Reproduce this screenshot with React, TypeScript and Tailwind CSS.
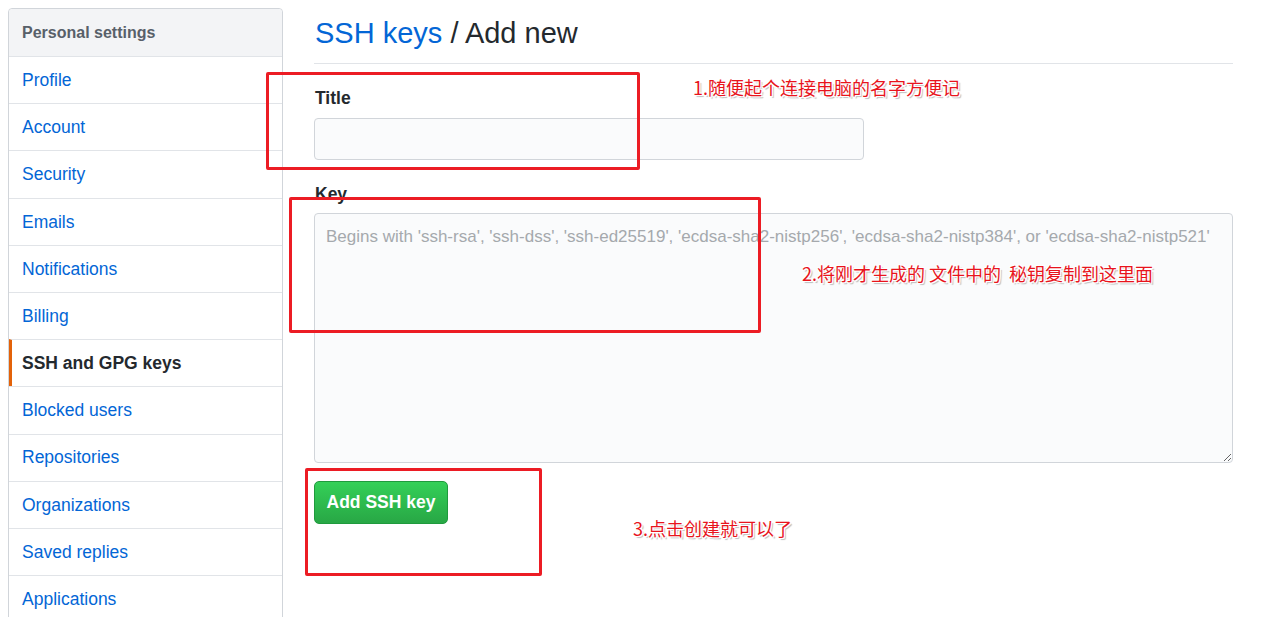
import React from "react";

const menuItems = [
  "Profile",
  "Account",
  "Security",
  "Emails",
  "Notifications",
  "Billing",
  "SSH and GPG keys",
  "Blocked users",
  "Repositories",
  "Organizations",
  "Saved replies",
  "Applications",
];

const noteStyle =
  "absolute text-[18px] leading-none text-[#e8141c] whitespace-pre [text-shadow:1px_1px_0_#fff,-1px_-1px_0_#fff,1px_-1px_0_#fff,-1px_1px_0_#fff,2px_2px_1px_#bbb] font-['Noto_Sans_CJK_SC',sans-serif]";

const App = () => {
  return (
    <div className="relative w-[1265px] h-[617px] overflow-hidden bg-white font-['Liberation_Sans','Noto_Sans_CJK_SC',sans-serif] text-[#24292e]">
      <div className="flex gap-[31px] pl-2 pt-2">
        {/* Sidebar */}
        <nav className="w-[275px] shrink-0 border border-[#d1d5da] rounded-t-[4px] flex flex-col">
          <div className="h-[47px] px-[13px] flex items-center bg-[#f3f4f6] text-[16px] font-semibold text-[#586069] rounded-t-[4px]">
            Personal settings
          </div>
          {menuItems.map((item) => {
            const active = item === "SSH and GPG keys";
            return (
              <div
                key={item}
                className={
                  active
                    ? "h-[47.2px] border-t border-[#e1e4e8] border-l-[3px] border-l-[#e36209] pl-[10px] flex items-center text-[17.5px] font-semibold text-[#24292e]"
                    : "h-[47.2px] border-t border-[#e1e4e8] px-[13px] flex items-center text-[17.5px] text-[#0366d6]"
                }
              >
                {item}
              </div>
            );
          })}
        </nav>

        {/* Main */}
        <main className="w-[919px] flex flex-col">
          <div className="mt-[7px] pb-[12px] border-b border-[#e1e4e8] text-[29px] leading-[36px] pl-px">
            <span className="text-[#0366d6]">SSH keys</span>
            <span className="text-[#24292e]"> / Add new</span>
          </div>

          <label className="mt-[22px] pl-px text-[17.5px] leading-[24px] font-semibold">Title</label>
          <input
            type="text"
            className="mt-[8px] w-[550px] h-[42px] bg-[#fafbfc] border border-[#d1d5da] rounded-[4px] px-3 outline-none"
          />

          <label className="mt-[22px] pl-px text-[17.5px] leading-[24px] font-semibold">Key</label>
          <textarea
            placeholder="Begins with 'ssh-rsa', 'ssh-dss', 'ssh-ed25519', 'ecdsa-sha2-nistp256', 'ecdsa-sha2-nistp384', or 'ecdsa-sha2-nistp521'"
            className="mt-[7px] w-[919px] h-[250px] bg-[#fafbfc] border border-[#d1d5da] rounded-[4px] px-[11px] py-[10px] text-[17px] placeholder:text-[#a5a9ad] outline-none resize-y"
          />

          <div className="mt-[18px]">
            <button className="w-[134px] h-[43px] rounded-[5px] border border-[#1f9a3d] bg-gradient-to-b from-[#34d058] to-[#28a745] text-white text-[17.5px] font-semibold">
              Add SSH key
            </button>
          </div>
        </main>
      </div>

      {/* Annotations */}
      <div className="absolute left-[266px] top-[72px] w-[374px] h-[98px] border-[3px] border-[#ec1c24] rounded-[2px]" />
      <div className="absolute left-[289px] top-[197px] w-[472px] h-[136px] border-[3px] border-[#ec1c24] rounded-[2px]" />
      <div className="absolute left-[305px] top-[468px] w-[237px] h-[108px] border-[3px] border-[#ec1c24] rounded-[2px]" />

      <div className={noteStyle + " left-[693px] top-[78px]"}>1.随便起个连接电脑的名字方便记</div>
      <div className={noteStyle + " left-[802px] top-[264px]"}>2.将刚才生成的 文件中的  秘钥复制到这里面</div>
      <div className={noteStyle + " left-[633px] top-[519px]"}>3.点击创建就可以了</div>
    </div>
  );
};

export default App;
